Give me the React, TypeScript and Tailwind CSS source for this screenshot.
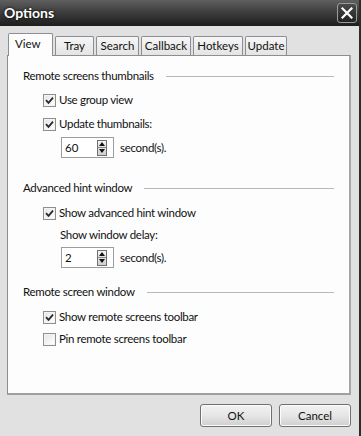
import React from 'react'

const font = { fontFamily: 'Lato, "Liberation Sans", Arial, sans-serif' }

function CheckBox({ checked }: { checked: boolean }) {
  return (
    <div className="flex h-[13px] w-[13px] shrink-0 items-center justify-center border border-[#8e8f8f] bg-gradient-to-br from-[#dcdcdc] to-[#fbfbfb]">
      <div className="flex h-[11px] w-[11px] items-center justify-center border border-[#f4f4f4] bg-gradient-to-br from-[#e6e6e6] to-[#ffffff]">
        {checked && (
          <svg width="9" height="9" viewBox="0 0 9 9">
            <path d="M1 4.2 L3.5 6.8 L8 1.6" fill="none" stroke="#2a2a2a" strokeWidth="1.8" />
          </svg>
        )}
      </div>
    </div>
  )
}

function CheckRow({ label, checked }: { label: string; checked: boolean }) {
  return (
    <div className="ml-[35px] flex h-[16px] items-center gap-[3px]">
      <CheckBox checked={checked} />
      <span className="text-[11.5px] leading-none tracking-[-0.3px] text-[#111]">{label}</span>
    </div>
  )
}

function GroupHeader({ label }: { label: string }) {
  return (
    <div className="ml-[15px] mr-[15px] flex h-[16px] items-center gap-[12px]">
      <span className="whitespace-nowrap text-[11.5px] leading-none tracking-[-0.3px] text-[#111]">{label}</span>
      <div className="h-px flex-1 bg-[#b9b9b9]" />
    </div>
  )
}

function Spinner({ value }: { value: string }) {
  return (
    <div className="ml-[53px] flex h-[21px] items-center gap-[6px]">
      <div className="flex h-[21px] w-[53px] items-center border border-[#9a9ca3] bg-white pl-[3px] pr-[6px]">
        <span className="flex-1 text-[11.5px] leading-none text-[#111]">{value}</span>
        <div className="flex h-[16px] w-[10px] flex-col border border-[#6f6f6f] bg-gradient-to-b from-[#f4f4f4] to-[#cfcfcf]">
          <div className="flex flex-1 items-center justify-center border-b border-[#8a8a8a]">
            <svg width="6" height="4" viewBox="0 0 6 4">
              <path d="M0 4 L3 0 L6 4 Z" fill="#111" />
            </svg>
          </div>
          <div className="flex flex-1 items-center justify-center">
            <svg width="6" height="4" viewBox="0 0 6 4">
              <path d="M0 0 L3 4 L6 0 Z" fill="#111" />
            </svg>
          </div>
        </div>
      </div>
      <span className="text-[11.5px] leading-none tracking-[-0.3px] text-[#111]">second(s).</span>
    </div>
  )
}

const tabs = [
  { label: 'View', w: 'w-[45px]' },
  { label: 'Tray', w: 'w-[39px]' },
  { label: 'Search', w: 'w-[43px]' },
  { label: 'Callback', w: 'w-[50px]' },
  { label: 'Hotkeys', w: 'w-[50px]' },
  { label: 'Update', w: 'w-[42px]' },
]

function Button({ label }: { label: string }) {
  return (
    <div className="flex h-[23px] w-[72px] items-center justify-center rounded-[3px] border border-[#707070] bg-gradient-to-b from-[#f2f2f2] via-[#e6e6e6] to-[#cfcfcf] text-[11.5px] leading-none text-[#111] shadow-[inset_0_0_0_1px_#fbfbfb]">
      {label}
    </div>
  )
}

export default function App() {
  return (
    <div className="flex h-[436px] w-[361px] flex-col border-r-2 border-[#2c2c2c] bg-[#e1e1e1]" style={font}>
      {/* Title bar */}
      <div className="flex h-[26px] items-center justify-between bg-gradient-to-b from-[#5f5f5f] via-[#3c3c3c] to-[#1d1d1d] pl-[4px] pr-[2px]">
        <span className="text-[14px] font-bold leading-none text-white [text-shadow:0_0_3px_#000]">Options</span>
        <div className="flex h-[20px] w-[20px] items-center justify-center rounded-[3px] border border-[#9a9a9a] bg-gradient-to-b from-[#4a4a4a] to-[#222]">
          <svg width="12" height="12" viewBox="0 0 12 12">
            <path d="M1.5 1.5 L10.5 10.5 M10.5 1.5 L1.5 10.5" stroke="#fff" strokeWidth="2.2" strokeLinecap="square" />
          </svg>
        </div>
      </div>

      <div className="flex flex-col pl-[7px] pt-[7px]">
        {/* Tabs */}
        <div className="relative z-10 flex h-[22px] items-end pl-[1px]">
          {tabs.map((t, i) =>
            i === 0 ? (
              <div
                key={t.label}
                className={`${t.w} -mb-px flex h-[23px] items-start justify-start rounded-t-[2px] border border-b-0 border-[#8c8e94] bg-[#fdfdfd] pl-[6px] pt-[4px] text-[11.5px] leading-none text-[#111]`}
              >
                {t.label}
              </div>
            ) : (
              <div
                key={t.label}
                className={`${t.w} ml-[2px] flex h-[19px] items-center justify-center rounded-t-[2px] border border-b-0 border-[#8c8e94] bg-gradient-to-b from-[#f6f6f6] to-[#e4e4e4] text-[11.5px] leading-none text-[#111]`}
              >
                {t.label}
              </div>
            )
          )}
        </div>

        {/* Panel */}
        <div className="flex h-[340px] w-[344px] flex-col border border-r-2 border-b-2 border-[#8c8e94] border-r-[#a5a5a5] border-b-[#a0a0a0] bg-[#fdfdfd] pt-[12px]">
          <GroupHeader label="Remote screens thumbnails" />
          <div className="mt-[8px]">
            <CheckRow label="Use group view" checked />
          </div>
          <div className="mt-[8px]">
            <CheckRow label="Update thumbnails:" checked />
          </div>
          <div className="mt-[5px]">
            <Spinner value="60" />
          </div>

          <div className="mt-[22px]">
            <GroupHeader label="Advanced hint window" />
          </div>
          <div className="mt-[9px]">
            <CheckRow label="Show advanced hint window" checked />
          </div>
          <div className="ml-[52px] mt-[6px] flex h-[16px] items-center text-[11.5px] leading-none tracking-[-0.3px] text-[#111]">
            Show window delay:
          </div>
          <div className="mt-[4px]">
            <Spinner value="2" />
          </div>

          <div className="mt-[16px]">
            <GroupHeader label="Remote screen window" />
          </div>
          <div className="mt-[9px]">
            <CheckRow label="Show remote screens toolbar" checked />
          </div>
          <div className="mt-[6px]">
            <CheckRow label="Pin remote screens toolbar" checked={false} />
          </div>
        </div>

        {/* Buttons */}
        <div className="mt-[9px] flex w-[344px] justify-end gap-[7px]">
          <Button label="OK" />
          <Button label="Cancel" />
        </div>
      </div>
    </div>
  )
}
